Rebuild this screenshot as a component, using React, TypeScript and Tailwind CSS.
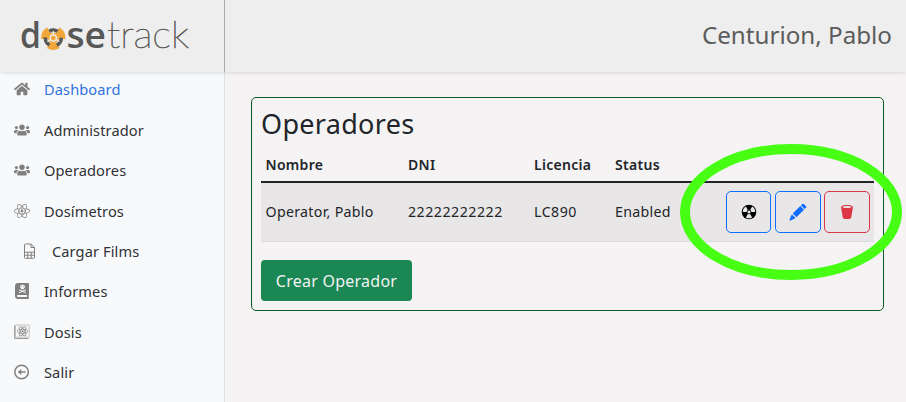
import type { ReactNode } from "react";
import { FaHome, FaUsers, FaReact, FaBookDead } from "react-icons/fa";
import { BsTrash2Fill } from "react-icons/bs";

function FilmIcon() {
  return (
    <svg width="15" height="16" viewBox="0 0 15 16" fill="none" stroke="#808080" strokeWidth="1">
      <path d="M9 1H3.5Q2.5 1 2.5 2V14.3Q2.5 15.3 3.5 15.3H11.5Q12.5 15.3 12.5 14.3V4.5ZM9 1V4.5H12.5" />
      <path d="M2.5 9.2H12.5M2.5 12.2H12.5M5.8 9.2V15.3M9.2 9.2V15.3" />
    </svg>
  );
}

function ExitIcon() {
  return (
    <svg width="16" height="16" viewBox="0 0 16 16" fill="none" stroke="#808080" strokeWidth="1.5">
      <circle cx="7.6" cy="8" r="6.8" />
      <path d="M11.5 8H5" />
      <path d="M7.3 4.9V11.1L3.8 8Z" fill="#808080" stroke="none" />
    </svg>
  );
}

function DosisIcon() {
  return (
    <svg width="16" height="16" viewBox="0 0 16 16" fill="none" stroke="#8a8a8a">
      <path d="M1.5 1H15.3V13.2H1.5Z" stroke="#b5b5b5" strokeWidth="0.8" />
      <path d="M.6 1.5V14.5H14.5" stroke="#9a9a9a" strokeWidth="1" />
      <g strokeWidth="0.8">
        <ellipse cx="8.6" cy="7.3" rx="5.3" ry="2.1" />
        <ellipse cx="8.6" cy="7.3" rx="5.3" ry="2.1" transform="rotate(60 8.6 7.3)" />
        <ellipse cx="8.6" cy="7.3" rx="5.3" ry="2.1" transform="rotate(120 8.6 7.3)" />
      </g>
      <circle cx="8.6" cy="7.3" r="1" fill="#777" stroke="none" />
    </svg>
  );
}

function RadiationIcon() {
  return (
    <svg width="16" height="16" viewBox="0 0 16 16">
      <circle cx="8" cy="8" r="7.3" fill="#000" />
      <g fill="#e8e6e7">
        <path d="M6.8 6L4.9 2.6A6.2 6.2 0 0 1 11.1 2.6L9.2 6A2.4 2.4 0 0 0 6.8 6Z" transform="rotate(60 8 8)" />
        <path d="M6.8 6L4.9 2.6A6.2 6.2 0 0 1 11.1 2.6L9.2 6A2.4 2.4 0 0 0 6.8 6Z" transform="rotate(180 8 8)" />
        <path d="M6.8 6L4.9 2.6A6.2 6.2 0 0 1 11.1 2.6L9.2 6A2.4 2.4 0 0 0 6.8 6Z" transform="rotate(300 8 8)" />
        <circle cx="8" cy="8" r="1.5" />
      </g>
    </svg>
  );
}

function CrayonIcon() {
  return (
    <svg width="18" height="18" viewBox="0 0 18 18" fill="#0d6efd">
      <path d="M13.3 1.1Q14.1.3 14.9 1.1L17 3.2Q17.7 4 17 4.8L15.7 6L12 2.4Z" />
      <path d="M11.3 3.1L15 6.8L7.4 14.3L3.7 10.6Z" />
      <path d="M3 11.5L6.5 15L5.4 15.8L1.4 17.6Q.2 18 .5 16.7L2.1 12.7Z" />
    </svg>
  );
}

function Logo() {
  return (
    <svg className="overflow-visible" width="172" height="54" viewBox="0 0 172 54" fill="#585857">
      <g fontFamily="'Open Sans','Noto Sans',sans-serif" fontSize="36">
        <text x="0" y="39.5" fontWeight="600" textLength="21" lengthAdjust="spacingAndGlyphs">d</text>
        <text x="46.5" y="39.5" fontWeight="600" textLength="39.5" lengthAdjust="spacingAndGlyphs">se</text>
      </g>
      <text x="87" y="39.5" fontFamily="Lato,sans-serif" fontWeight="100" fontSize="37" textLength="82" lengthAdjust="spacingAndGlyphs" stroke="#585857" strokeWidth="0.65">track</text>
      <g transform="translate(33.3 30)">
        <g fill="#f1a63a">
          <path d="M-6-10.4A12 12 0 0 0-12.2 1H-4A4 4 0 0 1-2-3.5Z" />
          <path d="M6-10.4A12 12 0 0 1 12.2 1H4A4 4 0 0 0 2-3.5Z" />
          <path d="M-6.5 10A12 12 0 0 0 6.5 10L2 3.5A4 4 0 0 1-2 3.5Z" />
        </g>
        <circle r="7.9" fill="none" stroke="#585857" strokeWidth="3.6" strokeDasharray="9 7.546" strokeDashoffset="4.5" transform="rotate(-90)" />
        <circle r="5.4" fill="#f1a63a" />
        <circle r="3.2" fill="#f1a63a" stroke="#eee" strokeWidth="1.5" />
        <path d="M0-4V-7M-3.5 2L-6 3.5M3.5 2L6 3.5" stroke="#eee" strokeWidth="1.2" />
      </g>
    </svg>
  );
}

function NavItem({ icon, label, tone = "text-[#303236]", nested = false }: { icon: ReactNode; label: string; tone?: string; nested?: boolean }) {
  return (
    <a className={`flex h-5 items-center ${nested ? "pl-[22px]" : "pl-[14px]"}`}>
      <span className="flex w-[30px] text-[#808080]">{icon}</span>
      <span className={`text-[14.6px] leading-5 font-[450] tracking-[0.1px] whitespace-nowrap ${tone}`}>{label}</span>
    </a>
  );
}

export default function App() {
  return (
    <div className="relative flex h-[402px] w-[906px] flex-col overflow-hidden bg-[#f5f3f4] font-['Noto_Sans','Open_Sans',sans-serif] text-[#212529]">
      <header className="z-10 flex h-[72px] shrink-0 bg-[#eeeeee] shadow-[0_1px_4px_rgba(0,0,0,0.12)]">
        <div className="w-[225px] border-r border-[#aaaaaa] pt-[8px] pl-[20px]">
          <Logo />
        </div>
        <div className="flex flex-1 items-center justify-end pr-[14px] pb-[2px] text-[24.2px] text-[#5c5c5c]">
          <span className="whitespace-nowrap">Centurion, Pablo</span>
        </div>
      </header>
      <div className="flex flex-1">
        <nav className="flex w-[225px] flex-col gap-[20.4px] border-r border-[#dedfe1] bg-[#f8f9fb] pt-[7.4px]">
          <NavItem icon={<FaHome size={16} />} label="Dashboard" tone="text-[#2f74e0]" />
          <NavItem icon={<FaUsers size={16} />} label="Administrador" />
          <NavItem icon={<FaUsers size={16} />} label="Operadores" />
          <NavItem icon={<FaReact size={16} />} label="Dosímetros" />
          <NavItem icon={<FilmIcon />} label="Cargar Films" nested />
          <NavItem icon={<FaBookDead size={16} />} label="Informes" />
          <NavItem icon={<DosisIcon />} label="Dosis" />
          <NavItem icon={<ExitIcon />} label="Salir" />
        </nav>
        <main className="flex-1 pt-[25px] pl-[26px]">
          <section className="h-[214px] w-[633px] rounded-[5px] border border-[#0b5d25] px-[9px]">
            <h1 className="h-[50px] pt-[9px] text-[27px] leading-[34px] tracking-[0.3px]">Operadores</h1>
            <div className="grid h-[35px] grid-cols-[142.5px_126px_81px_1fr] items-center border-b-2 border-[#212529] pl-[4.5px] text-[14px] font-semibold tracking-[0.3px]">
              <span>Nombre</span>
              <span>DNI</span>
              <span>Licencia</span>
              <span>Status</span>
            </div>
            <div className="grid h-[59px] grid-cols-[142.5px_126px_81px_111px_1fr] items-center border-b border-[#dcdcde] bg-[#e8e6e7] pl-[4.5px] text-[14.2px] tracking-[0.3px]">
              <span>Operator, Pablo</span>
              <span className="tracking-[0.5px]">22222222222</span>
              <span className="tracking-[0.5px]">LC890</span>
              <span>Enabled</span>
              <div className="flex gap-[3.5px]">
                <button className="flex h-[42px] w-[45px] items-center justify-center rounded-[5px] border border-[#0d6efd]"><RadiationIcon /></button>
                <button className="flex h-[42px] w-[46px] items-center justify-center rounded-[5px] border border-[#0d6efd]"><CrayonIcon /></button>
                <button className="flex h-[42px] w-[46px] items-center justify-center rounded-[5px] border border-[#dc3545] text-[#dc3545]"><BsTrash2Fill size={16} /></button>
              </div>
            </div>
            <button className="mt-[18px] h-[41px] w-[151px] rounded-[4px] bg-[#1a8754] text-[16px] tracking-[0.25px] whitespace-nowrap text-[#f3f3f3]">Crear Operador</button>
          </section>
        </main>
      </div>
      <svg className="pointer-events-none absolute top-0 left-0 z-20" width="906" height="402">
        <ellipse cx="791" cy="212" rx="106" ry="63" fill="none" stroke="#46ff12" strokeWidth="10" />
      </svg>
    </div>
  );
}
